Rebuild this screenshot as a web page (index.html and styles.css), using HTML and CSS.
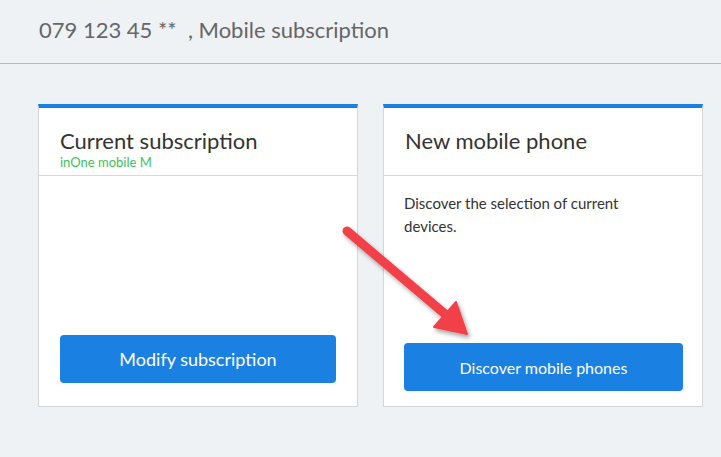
FILE: index.html
```html
<!DOCTYPE html>
<html>
<head>
    <title>Mobile subscription</title>
    <meta charset="UTF-8">
    <link rel="stylesheet" href="styles.css">
</head>
<body>
    <div class="header">079 123 45 ** &nbsp;, Mobile subscription</div>

    <div class="main">
        <div class="card">
            <div class="card-head">
                <h2>Current subscription</h2>
                <div class="plan">inOne mobile M</div>
            </div>
            <div class="card-body body-one">
                <button class="btn btn-big">Modify subscription</button>
            </div>
        </div>

        <div class="card">
            <div class="card-head">
                <h2>New mobile phone</h2>
            </div>
            <div class="card-body body-two">
                <p>Discover the selection of current devices.</p>
                <button class="btn">Discover mobile phones</button>
            </div>
        </div>

        <svg class="arrow" width="721" height="457" viewBox="0 0 721 457">
            <defs>
                <filter id="shadow" x="-20%" y="-20%" width="140%" height="140%">
                    <feDropShadow dx="2" dy="3" stdDeviation="2" flood-color="#000" flood-opacity="0.35"/>
                </filter>
            </defs>
            <g filter="url(#shadow)" fill="#f2404a" stroke="#f2404a">
                <line x1="347" y1="231" x2="445" y2="314" stroke-width="9" stroke-linecap="round"/>
                <polygon points="467,334 434,327 456,302" stroke-width="2" stroke-linejoin="round"/>
            </g>
        </svg>
    </div>
</body>
</html>
```

FILE: styles.css
```css
html { margin: 0; padding: 0; border: 0; }
body { margin: 0; font-family: 'Lato', 'Open Sans', sans-serif; color: #333; background-color: #eef2f5; }

.header { height: 64px; line-height: 60px; padding-left: 39px; font-size: 22px; color: #666; border-bottom: 1px solid #b9bcbf; box-sizing: border-box; }

.main { position: relative; display: flex; gap: 25px; padding: 40px 18px 0 38px; }

.card { width: 320px; height: 303px; box-sizing: border-box; background: #fff; border: 1px solid #d3d7da; border-top: 4px solid #1a80e2; display: flex; flex-direction: column; }
.card-head { height: 68px; box-sizing: border-box; border-bottom: 1px solid #d6d9dc; padding: 19px 21px 0 21px; }
.card h2 { margin: 0; font-size: 22px; font-weight: 400; line-height: 28px; color: #333; }
.plan { font-size: 13px; line-height: 14px; color: #3ec160; }

.card-body { flex: 1; display: flex; flex-direction: column; padding: 0 21px; }
.body-one { justify-content: flex-end; padding-bottom: 23px; }
.body-two { padding-top: 16px; padding-bottom: 15px; padding-left: 20px; padding-right: 19px; }
.body-two p { margin: 0; font-size: 15px; line-height: 23px; color: #333; flex: 1; padding-right: 40px; }

.btn { height: 48px; border: 0; border-radius: 4px; background: #1a80e2; color: #fff; font-family: inherit; font-size: 16px; cursor: pointer; }
.btn-big { font-size: 18px; }

.arrow { position: absolute; left: 0; top: -64px; pointer-events: none; }
```
